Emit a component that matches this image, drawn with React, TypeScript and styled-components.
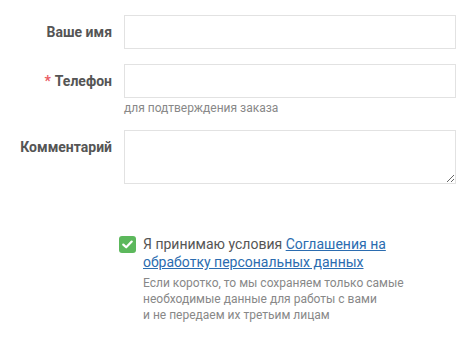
import React from "react";
import styled, { createGlobalStyle } from "styled-components";

const Global = createGlobalStyle`
  html, body { margin: 0; padding: 0; background: #fff; }
  body { font-family: Roboto, "Liberation Sans", Arial, sans-serif; }
  * { box-sizing: border-box; }
`;

const Form = styled.form`
  display: grid;
  grid-template-columns: 112px 332px;
  column-gap: 12px;
  padding-top: 15px;
  width: 475px;
`;

const Label = styled.label`
  grid-column: 1;
  text-align: right;
  font-weight: 700;
  font-size: 14px;
  line-height: 20px;
  color: #555;
  padding-top: 7px;
`;

const Star = styled.span`
  color: #ea5b63;
  margin-right: 4px;
`;

const Field = styled.div<{ $gap?: number }>`
  grid-column: 2;
  display: flex;
  flex-direction: column;
  margin-bottom: ${(p) => (p.$gap ?? 15)}px;
`;

const Input = styled.input`
  width: 332px;
  height: 34px;
  border: 1px solid #e2e2e2;
  border-radius: 0;
  background: #fff;
  outline: none;
  padding: 6px 10px;
  font: 14px Roboto, sans-serif;
`;

const TextArea = styled.textarea`
  width: 332px;
  height: 54px;
  border: 1px solid #e2e2e2;
  border-radius: 0;
  background: #fff;
  outline: none;
  resize: vertical;
  padding: 6px 10px;
  font: 14px Roboto, sans-serif;
  display: block;
`;

const Hint = styled.div`
  font-size: 12px;
  line-height: 16px;
  color: #888;
  margin-top: 2px;
`;

const Agree = styled.div`
  grid-column: 2;
  margin-left: -5px;
  margin-top: 51px;
  display: flex;
  align-items: flex-start;
  gap: 7px;
`;

const Check = styled.span`
  flex: none;
  width: 17px;
  height: 17px;
  margin-top: 1px;
  border-radius: 3px;
  background: #5cb85c;
  display: flex;
  align-items: center;
  justify-content: center;
`;

const AgreeBody = styled.div`
  width: 268px;
`;

const AgreeText = styled.div`
  font-size: 14px;
  line-height: 18px;
  color: #555;
`;

const Link = styled.a`
  color: #2b6cb0;
  text-decoration: underline;
`;

const Note = styled.div`
  margin-top: 4px;
  font-size: 12px;
  line-height: 16px;
  color: #888;
`;

export default function App() {
  return (
    <>
      <Global />
      <Form onSubmit={(e) => e.preventDefault()}>
        <Label htmlFor="name">Ваше имя</Label>
        <Field>
          <Input id="name" type="text" />
        </Field>

        <Label htmlFor="phone">
          <Star>*</Star>Телефон
        </Label>
        <Field $gap={14}>
          <Input id="phone" type="tel" />
          <Hint>для подтверждения заказа</Hint>
        </Field>

        <Label htmlFor="comment">Комментарий</Label>
        <Field $gap={0}>
          <TextArea id="comment" />
        </Field>

        <Agree>
          <Check>
            <svg width="11" height="9" viewBox="0 0 11 9">
              <path d="M1.3 4.6 L4.2 7.3 L9.7 1.6" fill="none" stroke="#fff" strokeWidth="2.2" strokeLinecap="round" strokeLinejoin="round" />
            </svg>
          </Check>
          <AgreeBody>
            <AgreeText>
              Я принимаю условия <Link href="#">Соглашения на обработку персональных данных</Link>
            </AgreeText>
            <Note>
              Если коротко, то мы сохраняем только самые необходимые данные для работы с вами
              <br />и не передаем их третьим лицам
            </Note>
          </AgreeBody>
        </Agree>
      </Form>
    </>
  );
}
